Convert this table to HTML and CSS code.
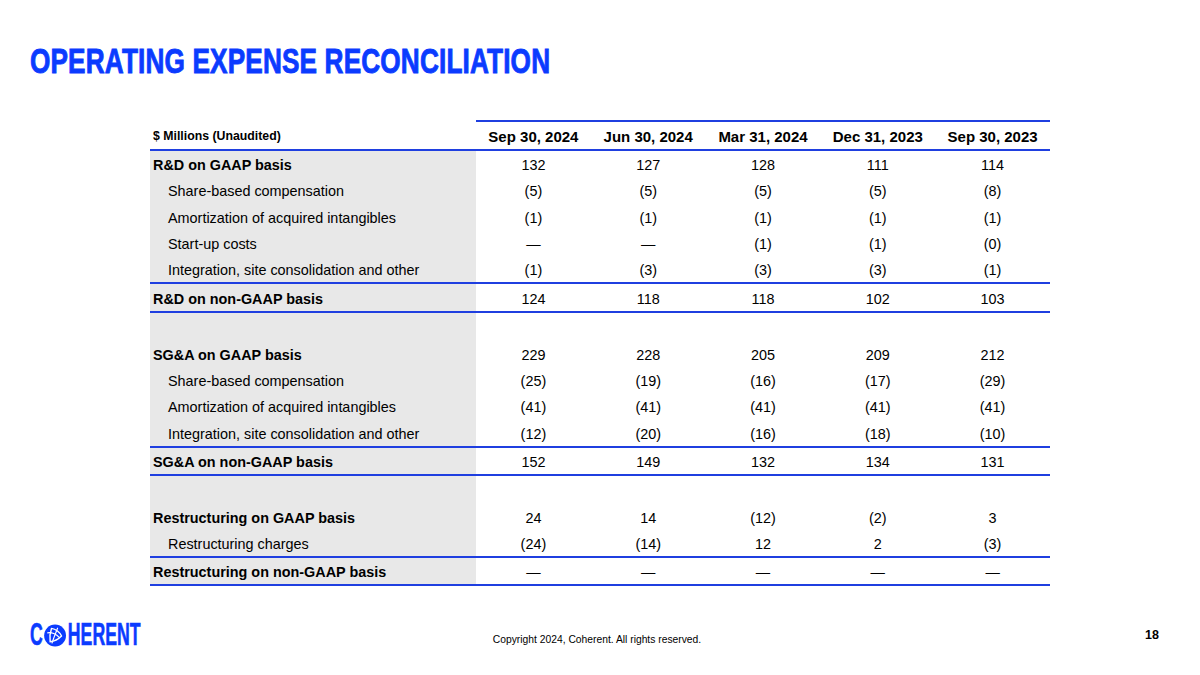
FILE: index.html
```html
<!DOCTYPE html>
<html>
<head>
<meta charset="utf-8">
<link rel="stylesheet" href="styles.css">
</head>
<body>
<div class="slide">
  <h1 class="title"><span class="title-text">OPERATING EXPENSE RECONCILIATION</span></h1>
  <table class="recon">
    <thead>
      <tr>
        <th class="label unit">$ Millions (Unaudited)</th>
        <th class="val">Sep 30, 2024</th>
        <th class="val">Jun 30, 2024</th>
        <th class="val">Mar 31, 2024</th>
        <th class="val">Dec 31, 2023</th>
        <th class="val">Sep 30, 2023</th>
      </tr>
    </thead>
    <tbody>
      <tr><td class="label bold">R&amp;D on GAAP basis</td><td>132</td><td>127</td><td>128</td><td>111</td><td>114</td></tr>
      <tr><td class="label sub">Share-based compensation</td><td>(5)</td><td>(5)</td><td>(5)</td><td>(5)</td><td>(8)</td></tr>
      <tr><td class="label sub">Amortization of acquired intangibles</td><td>(1)</td><td>(1)</td><td>(1)</td><td>(1)</td><td>(1)</td></tr>
      <tr><td class="label sub">Start-up costs</td><td>—</td><td>—</td><td>(1)</td><td>(1)</td><td>(0)</td></tr>
      <tr class="ruled"><td class="label sub">Integration, site consolidation and other</td><td>(1)</td><td>(3)</td><td>(3)</td><td>(3)</td><td>(1)</td></tr>
      <tr class="total ruled"><td class="label bold">R&amp;D on non-GAAP basis</td><td>124</td><td>118</td><td>118</td><td>102</td><td>103</td></tr>
      <tr class="blank"><td class="label"></td><td></td><td></td><td></td><td></td><td></td></tr>
      <tr><td class="label bold">SG&amp;A on GAAP basis</td><td>229</td><td>228</td><td>205</td><td>209</td><td>212</td></tr>
      <tr><td class="label sub">Share-based compensation</td><td>(25)</td><td>(19)</td><td>(16)</td><td>(17)</td><td>(29)</td></tr>
      <tr><td class="label sub">Amortization of acquired intangibles</td><td>(41)</td><td>(41)</td><td>(41)</td><td>(41)</td><td>(41)</td></tr>
      <tr class="ruled"><td class="label sub">Integration, site consolidation and other</td><td>(12)</td><td>(20)</td><td>(16)</td><td>(18)</td><td>(10)</td></tr>
      <tr class="total ruled"><td class="label bold">SG&amp;A on non-GAAP basis</td><td>152</td><td>149</td><td>132</td><td>134</td><td>131</td></tr>
      <tr class="blank"><td class="label"></td><td></td><td></td><td></td><td></td><td></td></tr>
      <tr class="short"><td class="label bold">Restructuring on GAAP basis</td><td>24</td><td>14</td><td>(12)</td><td>(2)</td><td>3</td></tr>
      <tr class="short ruled"><td class="label sub">Restructuring charges</td><td>(24)</td><td>(14)</td><td>12</td><td>2</td><td>(3)</td></tr>
      <tr class="total ruled"><td class="label bold">Restructuring on non-GAAP basis</td><td>—</td><td>—</td><td>—</td><td>—</td><td>—</td></tr>
    </tbody>
  </table>
  <footer class="footer">
    <div class="logo">
      <span class="logo-text">C</span>
      <svg class="logo-mark" viewBox="0 0 24 24" preserveAspectRatio="none" aria-hidden="true">
        <circle cx="12" cy="12" r="11.5" fill="#0b3bff"/>
        <path d="M8.2 4.6 C12.5 5.2 17.2 8.6 18.8 12.6 C15.6 15.8 11 18.2 6.8 18.6 C6.2 14 6.6 9 8.2 4.6 Z" fill="none" stroke="#fff" stroke-width="1.5" stroke-linejoin="round"/>
        <path d="M4.2 9.2 C8 8.4 13.4 10.4 16.6 14.2 M14.6 4.4 C13.2 8.2 10.8 13.4 8.8 19.8" fill="none" stroke="#fff" stroke-width="1.2" stroke-linecap="round"/>
      </svg>
      <span class="logo-text">HERENT</span>
    </div>
    <div class="copyright">Copyright 2024, Coherent. All rights reserved.</div>
    <div class="page-num">18</div>
  </footer>
</div>
</body>
</html>
```

FILE: styles.css
```css
html, body {
  margin: 0;
  padding: 0;
  background: #ffffff;
}

.slide {
  width: 1200px;
  height: 675px;
  overflow: hidden;
  font-family: "Liberation Sans", Arial, sans-serif;
  color: #000;
  display: flex;
  flex-direction: column;
}

.title {
  margin: 43px 0 0 30px;
  padding: 0;
  height: 35px;
  font-size: 35px;
  line-height: 35px;
  font-weight: 700;
  color: #0b3bff;
  white-space: nowrap;
}

.title-text {
  display: inline-block;
  transform: scaleX(0.748);
  transform-origin: 0 0;
  -webkit-text-stroke: 0.9px #0b3bff;
  letter-spacing: 0.2px;
}

.recon {
  margin: 42px 0 0 150px;
  width: 900px;
  border-collapse: separate;
  border-spacing: 0;
  table-layout: fixed;
}

.recon th,
.recon td {
  padding: 0;
  text-align: center;
  white-space: nowrap;
}

.recon th {
  height: 25px;
  font-size: 15px;
  font-weight: 700;
  padding-top: 2px;
  border-bottom: 2px solid #1f3fe0;
}

.recon th.val {
  width: 114.8px;
  border-top: 2px solid #1f3fe0;
}

.recon th.label {
  width: 323px;
  text-align: left;
  padding-left: 3px;
  font-size: 12.3px;
}

.recon td {
  height: 24.3px;
  font-size: 14.4px;
  padding-top: 2px;
}

.recon td.label {
  background: #e8e8e8;
  text-align: left;
  padding-left: 3px;
}

.recon td.label.sub {
  padding-left: 18px;
}

.recon td.label.bold {
  font-weight: 700;
}

.recon tr.total td {
  height: 24.5px;
}

.recon tr.blank td {
  height: 25.5px;
}

.recon tr.short td {
  height: 24px;
}

.recon tr.ruled td {
  border-bottom: 2px solid #1f3fe0;
}

.footer {
  margin-top: auto;
  height: 53px;
  display: grid;
  grid-template-columns: 1fr auto 1fr;
  align-items: start;
}

.logo {
  margin: 1px 0 0 30px;
  display: flex;
  align-items: center;
  height: 24px;
  transform: scaleX(0.57);
  transform-origin: 0 0;
}

.logo-text {
  flex-shrink: 0;
  font-size: 31px;
  line-height: 24px;
  font-weight: 700;
  color: #0b3bff;
  -webkit-text-stroke: 0.6px #0b3bff;
}

.logo-mark {
  flex-shrink: 0;
  width: 40px;
  height: 23px;
  margin: 0 2px 0 2px;
}

.copyright {
  margin-top: 12px;
  font-size: 10.3px;
  line-height: 12px;
  color: #000;
  transform: translateX(-3px);
}

.page-num {
  justify-self: end;
  margin: 6px 41px 0 0;
  font-size: 12.5px;
  line-height: 14px;
  font-weight: 700;
}
```
